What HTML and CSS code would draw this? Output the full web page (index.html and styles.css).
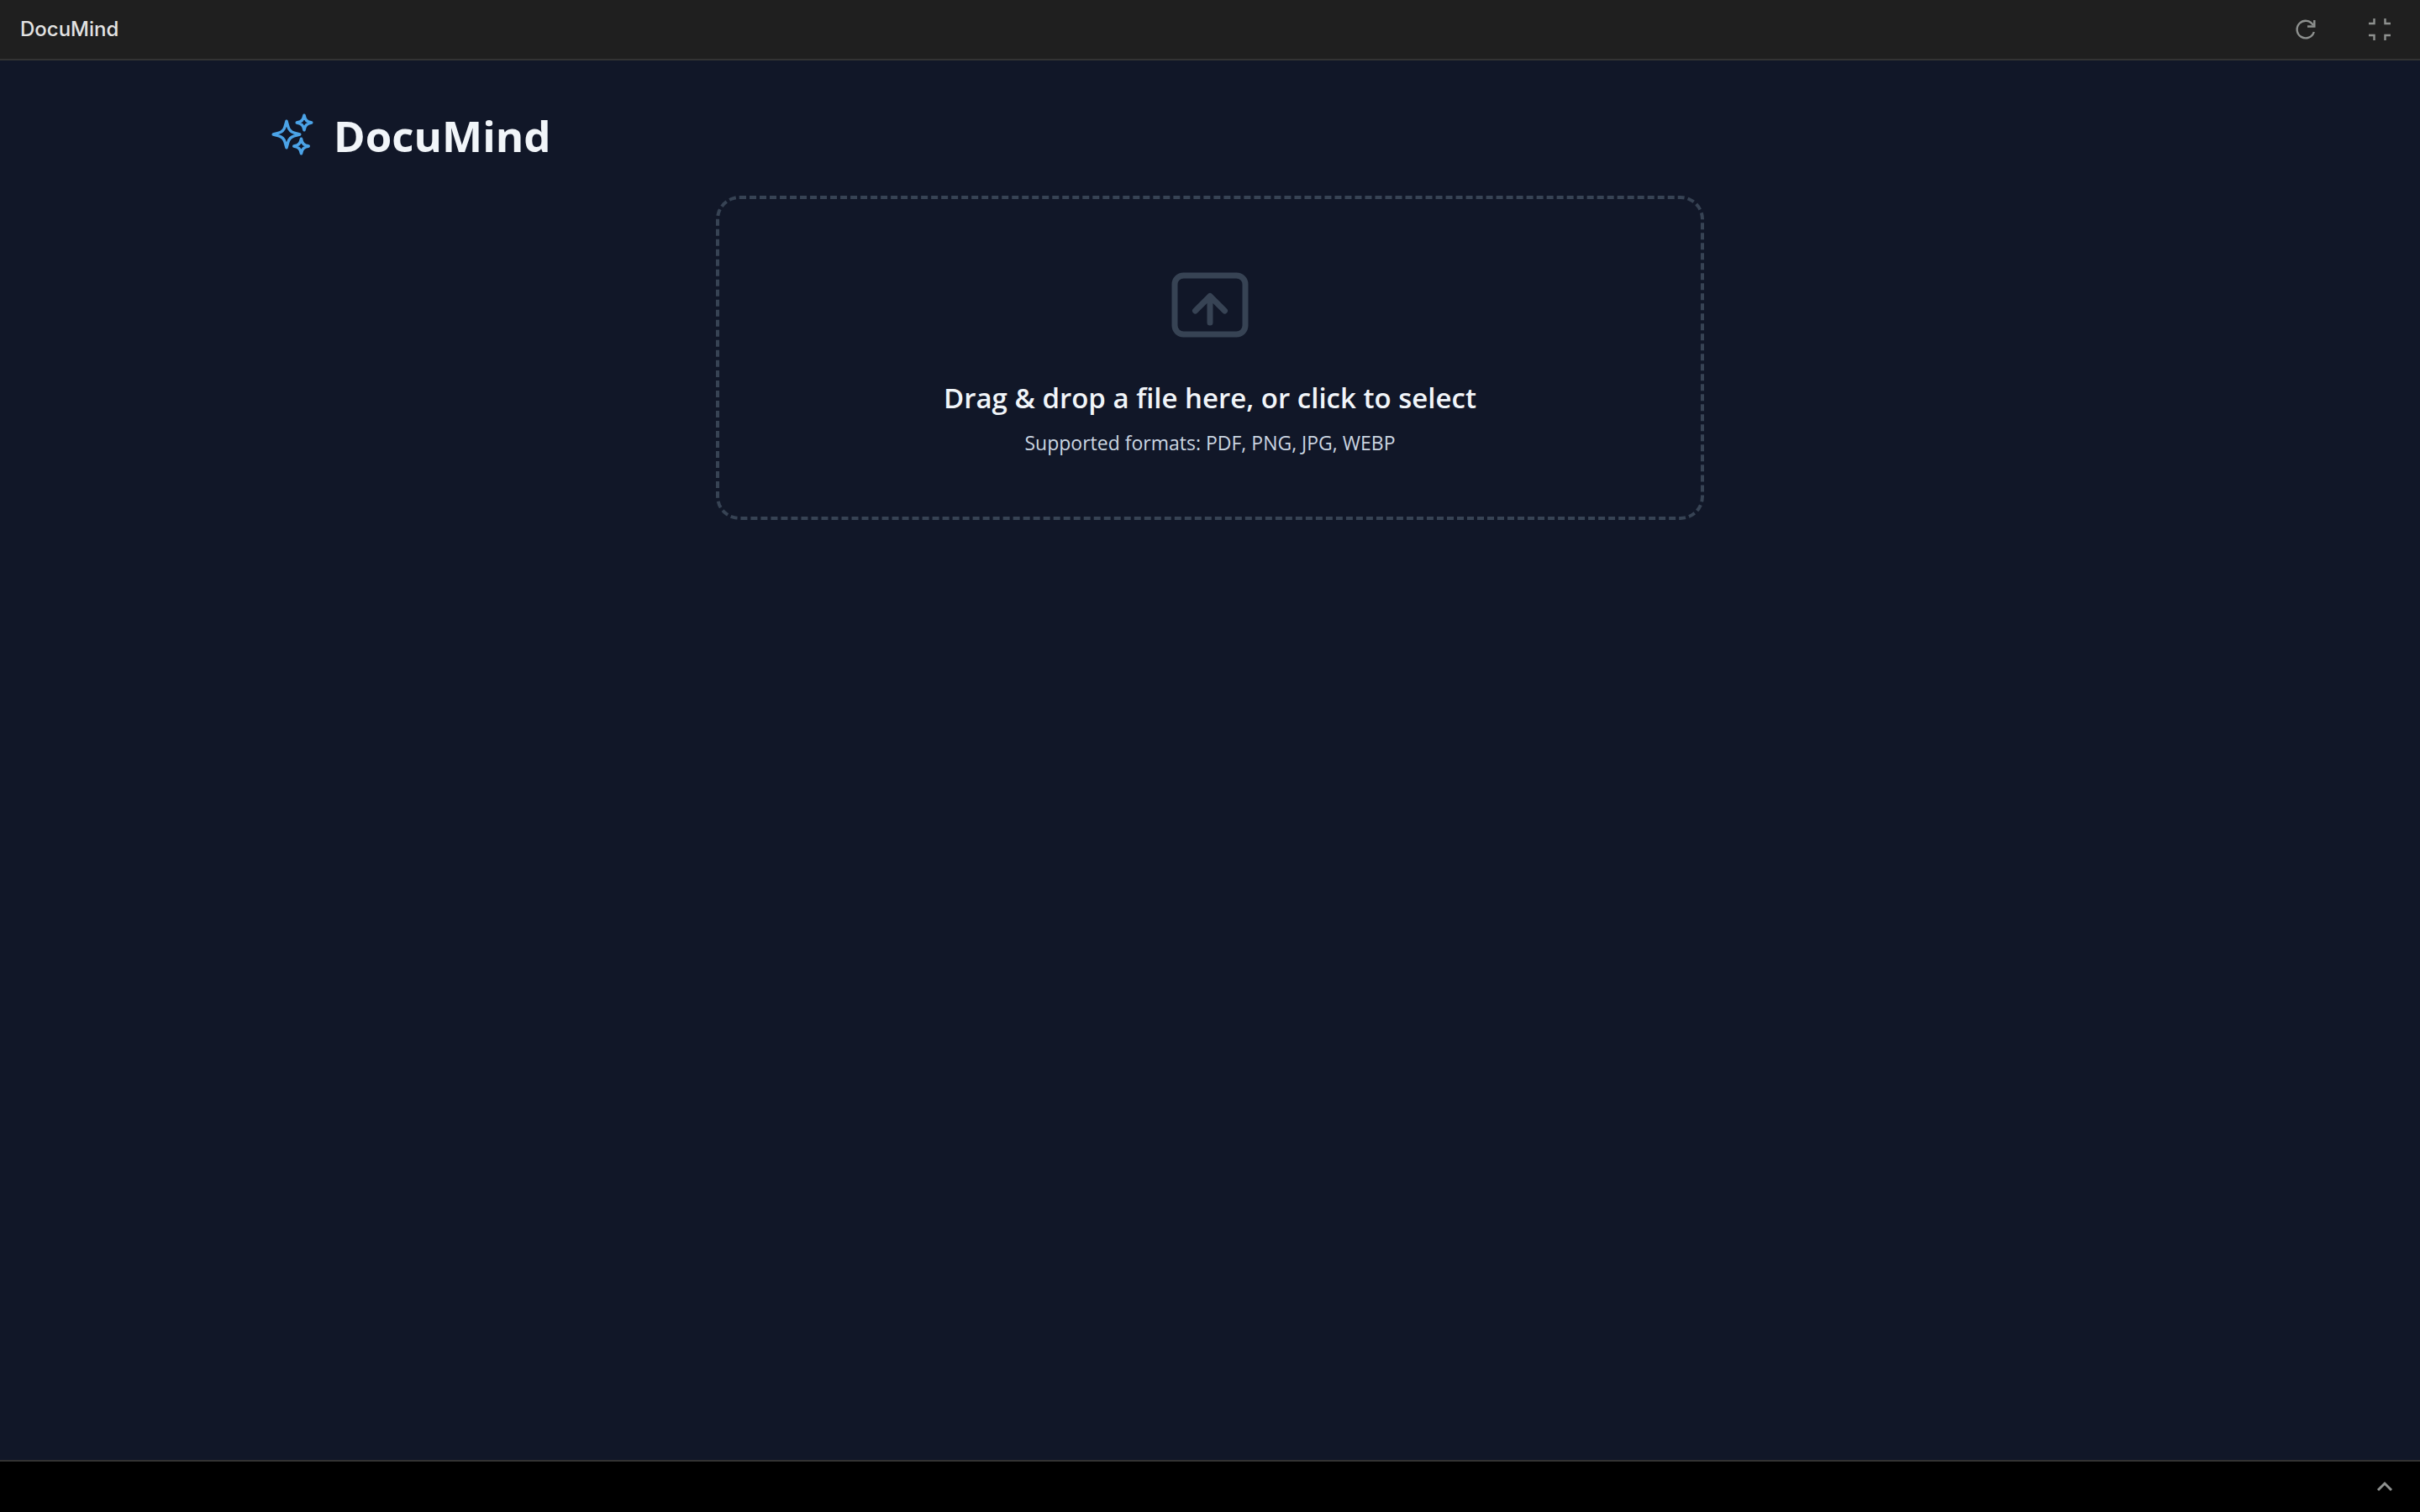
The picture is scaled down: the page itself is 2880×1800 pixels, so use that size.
FILE: index.html
```html
<!DOCTYPE html>
<html lang="en">
<head>
  <meta charset="utf-8">
  <meta name="viewport" content="width=device-width, initial-scale=1">
  <title>DocuMind</title>
  <link rel="stylesheet" href="styles.css">
</head>
<body>
  <header class="topbar">
    <span class="topbar-title">DocuMind</span>
    <div class="topbar-actions">
      <button class="icon-button" type="button" aria-label="Reload">
        <svg class="action-icon" viewBox="0 0 32 32" aria-hidden="true">
          <path d="M25.8 19A10.3 10.3 0 1 1 24.8 10.8"/>
          <path d="M26.3 5V12.5H18" />
        </svg>
      </button>
      <button class="icon-button" type="button" aria-label="Exit full screen">
        <svg class="action-icon" viewBox="0 0 32 32" aria-hidden="true">
          <path d="M3 9H9.5V3M29 9H22.5V3M3 23H9.5V29M29 23H22.5V29"/>
        </svg>
      </button>
    </div>
  </header>

  <main class="content">
    <div class="brand">
      <svg class="brand-icon" viewBox="0 0 24 24" aria-hidden="true">
        <path d="M9.813 15.904 9 18.75l-.813-2.846a4.5 4.5 0 0 0-3.09-3.09L2.25 12l2.846-.813a4.5 4.5 0 0 0 3.09-3.09L9 5.25l.813 2.846a4.5 4.5 0 0 0 3.09 3.09L15.75 12l-2.846.813a4.5 4.5 0 0 0-3.09 3.09Z"/>
        <path d="M18 2.25l.45 1.6a3 3 0 0 0 1.7 1.7L21.75 6l-1.6.45a3 3 0 0 0-1.7 1.7L18 9.75l-.45-1.6a3 3 0 0 0-1.7-1.7L14.25 6l1.6-.45a3 3 0 0 0 1.7-1.7Z"/>
        <path d="M16.5 14.25l.45 1.6a3 3 0 0 0 1.7 1.7l1.6.45-1.6.45a3 3 0 0 0-1.7 1.7l-.45 1.6-.45-1.6a3 3 0 0 0-1.7-1.7l-1.6-.45 1.6-.45a3 3 0 0 0 1.7-1.7Z"/>
      </svg>
      <h1 class="brand-name">DocuMind</h1>
    </div>

    <button class="dropzone" type="button">
      <svg class="dropzone-icon" viewBox="0 0 24 24" aria-hidden="true">
        <rect x="3" y="4.5" width="18" height="15" rx="2.25"/>
        <path d="M12 16.5V9.75M8.25 13.5 12 9.75l3.75 3.75"/>
      </svg>
      <span class="dropzone-title">Drag &amp; drop a file here, or click to select</span>
      <span class="dropzone-hint">Supported formats: PDF, PNG, JPG, WEBP</span>
    </button>
  </main>

  <footer class="bottombar">
    <button class="icon-button" type="button" aria-label="Expand panel">
      <svg class="chevron" viewBox="0 0 24 24" aria-hidden="true">
        <path d="M4 16 12 8l8 8"/>
      </svg>
    </button>
  </footer>
</body>
</html>
```
FILE: styles.css
```css
* {
  box-sizing: border-box;
}

body {
  margin: 0;
  min-height: 100vh;
  display: flex;
  flex-direction: column;
  background: #111728;
  color: #f1f5f9;
  font-family: "Open Sans", "Noto Sans", sans-serif;
}

svg {
  display: block;
  fill: none;
  stroke: currentColor;
}

button {
  font: inherit;
  cursor: pointer;
}

.topbar {
  display: flex;
  align-items: center;
  justify-content: space-between;
  height: 72px;
  padding: 0 32px 0 24px;
  background: #1f1f1f;
  border-bottom: 2px solid #333333;
}

.topbar-title {
  color: #e3e3e3;
  font-family: Inter, sans-serif;
  font-size: 24px;
  font-weight: 500;
  line-height: 32px;
}

.topbar-actions {
  display: flex;
  gap: 56px;
}

.icon-button {
  padding: 0;
  border: 0;
  background: none;
  color: #8e918f;
}

.action-icon {
  width: 32px;
  height: 32px;
  stroke-width: 2.4;
}

.content {
  flex: 1;
  width: 100%;
  max-width: 2240px;
  margin: 0 auto;
  padding: 56px 0;
}

.brand {
  display: flex;
  align-items: center;
  gap: 21px;
  margin-bottom: 42px;
}

.brand-icon {
  width: 56px;
  height: 56px;
  color: #4ba3e7;
  stroke-width: 1.5;
  stroke-linecap: round;
  stroke-linejoin: round;
}

.brand-name {
  margin: 0;
  padding-top: 3px;
  font-size: 51px;
  font-weight: 700;
  line-height: 60px;
}

.dropzone {
  display: flex;
  flex-direction: column;
  align-items: center;
  width: 100%;
  max-width: 1176px;
  margin: 0 auto;
  padding: 70px;
  border: 4px dashed #374354;
  border-radius: 28px;
  background: none;
  color: #f1f5f9;
}

.dropzone-icon {
  width: 112px;
  height: 112px;
  margin-bottom: 30px;
  color: #374354;
  stroke-width: 1.5;
  stroke-linecap: round;
  stroke-linejoin: round;
}

.dropzone-title {
  margin-bottom: 12px;
  font-size: 33px;
  font-weight: 600;
  line-height: 49px;
}

.dropzone-hint {
  color: #cbd5e1;
  font-size: 23px;
  line-height: 35px;
}

.bottombar {
  display: flex;
  align-items: center;
  justify-content: flex-end;
  height: 62px;
  padding: 0 30px;
  background: #000000;
  border-top: 2px solid #333333;
}

.chevron {
  width: 24px;
  height: 24px;
  stroke-width: 3;
}
```
